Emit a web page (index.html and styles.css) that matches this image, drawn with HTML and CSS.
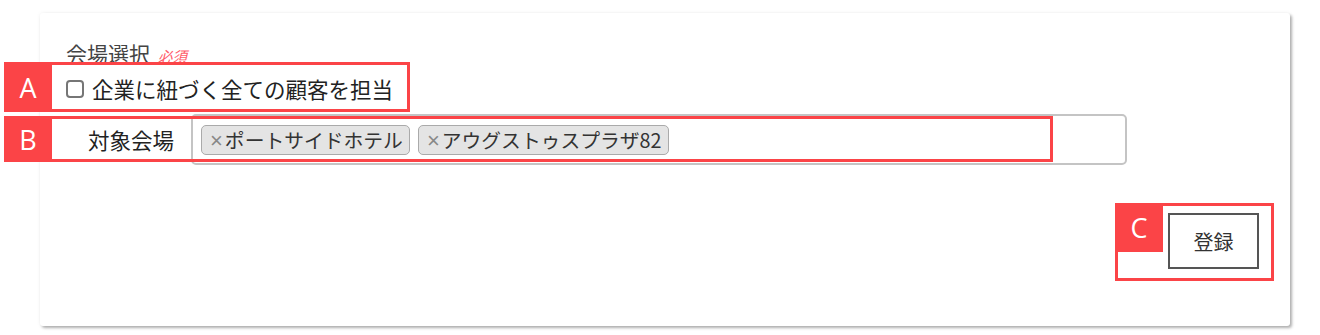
FILE: index.html
```html
<!DOCTYPE html>
<html lang="ja">
  <head>
    <meta charset="UTF-8" />
    <meta name="viewport" content="width=device-width, initial-scale=1.0" />
    <title>会場選択</title>
    <link rel="stylesheet" href="styles.css">
  </head>
  <body>
    <div class="page">
      <section class="card">
        <h3 class="title">会場選択<span class="required">必須</span></h3>
        <label class="check-row">
          <span class="check"></span>
          <span>企業に紐づく全ての顧客を担当</span>
        </label>
        <div class="field-row">
          <span class="field-label">対象会場</span>
          <div class="select-box">
            <span class="tag"><span class="tag-x">×</span>ポートサイドホテル</span>
            <span class="tag"><span class="tag-x">×</span>アウグストゥスプラザ82</span>
          </div>
        </div>
        <div class="btn-row">
          <button class="btn">登録</button>
        </div>
      </section>

      <div class="mark mark-a"><span class="mark-label">A</span></div>
      <div class="mark mark-b"><span class="mark-label">B</span></div>
      <div class="mark mark-c"><span class="mark-label">C</span></div>
    </div>
  </body>
</html>
```

FILE: styles.css
```css
html {
  font-size: 16px;
}
body {
  margin: 0;
  background-color: #fff;
  font-family: "Noto Sans CJK JP", "Noto Sans", sans-serif;
  color: #333;
}
.page {
  position: relative;
  width: 1320px;
  height: 335px;
  overflow: hidden;
}
.card {
  box-sizing: border-box;
  width: 1250px;
  height: 313px;
  margin: 13px 0 0 40px;
  padding: 28px 31px 0 26px;
  background-color: #fff;
  border-radius: 3px;
  box-shadow: 2px 2px 3px rgba(0, 0, 0, 0.3), 0 0 4px rgba(0, 0, 0, 0.06);
}
.title {
  margin: 0;
  height: 24px;
  font-size: 21px;
  font-weight: 400;
  line-height: 24px;
  color: #444;
}
.required {
  margin-left: 8px;
  font-size: 14.5px;
  line-height: 1;
  color: #ff5c6a;
  font-style: italic;
}
.check-row {
  display: flex;
  align-items: center;
  margin-top: 12px;
  font-size: 21.5px;
  line-height: 24px;
  color: #222;
}
.check {
  flex: none;
  box-sizing: border-box;
  width: 18px;
  height: 18px;
  margin-right: 8px;
  border: 2px solid #767676;
  border-radius: 4px;
  background-color: #fff;
}
.field-row {
  display: flex;
  align-items: center;
  margin-top: 13px;
}
.field-label {
  width: 108px;
  margin-right: 17px;
  text-align: right;
  font-size: 21.5px;
  color: #222;
}
.select-box {
  box-sizing: border-box;
  display: flex;
  align-items: center;
  gap: 8px;
  width: 936px;
  height: 51px;
  padding: 0 8px;
  border: 2px solid #c4c4c4;
  border-radius: 5px;
}
.tag {
  box-sizing: border-box;
  height: 30px;
  padding: 0 6px 0 8px;
  border: 1px solid #aaa;
  border-radius: 5px;
  background-color: #e4e4e4;
  font-size: 19.8px;
  line-height: 28px;
  color: #333;
}
.tag-x {
  margin-right: 2px;
  font-family: "Liberation Sans", sans-serif;
  font-size: 22px;
  color: #888;
}
.btn-row {
  display: flex;
  justify-content: flex-end;
  margin-top: 48px;
}
.btn {
  box-sizing: border-box;
  width: 91px;
  height: 56px;
  border: 2px solid #555;
  background-color: #fff;
  font-family: "Noto Sans CJK JP", sans-serif;
  font-size: 20px;
  color: #333;
}

/* annotation marks */
.mark {
  position: absolute;
  box-sizing: border-box;
  border: 3px solid #fb4447;
}
.mark-label {
  position: absolute;
  top: -3px;
  left: -3px;
  width: 48px;
  display: flex;
  align-items: center;
  justify-content: center;
  background-color: #fb4447;
  color: #fff;
  font-family: "Open Sans", sans-serif;
  font-size: 27px;
}
.mark-a {
  left: 4px;
  top: 62px;
  width: 406px;
  height: 50px;
}
.mark-a .mark-label,
.mark-b .mark-label {
  height: calc(100% + 6px);
}
.mark-b {
  left: 4px;
  top: 116px;
  width: 1049px;
  height: 46px;
}
.mark-c {
  left: 1115px;
  top: 203px;
  width: 159px;
  height: 78px;
}
.mark-c .mark-label {
  height: 49px;
}
```
